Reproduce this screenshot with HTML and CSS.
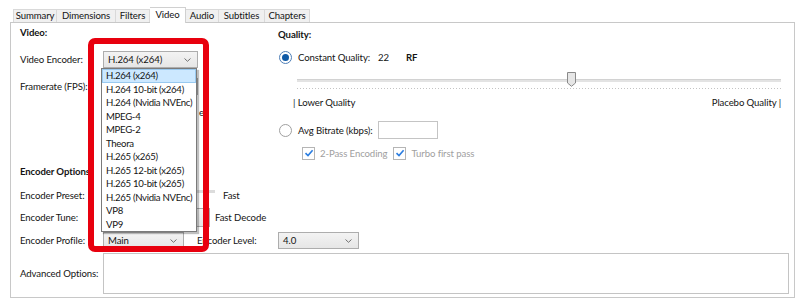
FILE: index.html
```html
<!DOCTYPE html>
<html lang="en">
<head>
  <meta charset="UTF-8">
  <title>Video Settings</title>
  <link rel="stylesheet" href="styles.css">
</head>
<body>
  <div class="tabs">
    <div class="tab w-summary">Summary</div>
    <div class="tab w-dim">Dimensions</div>
    <div class="tab w-filters">Filters</div>
    <div class="tab active w-video">Video</div>
    <div class="tab w-audio">Audio</div>
    <div class="tab w-subs">Subtitles</div>
    <div class="tab w-chap">Chapters</div>
  </div>

  <div class="panel">
    <div class="top">
      <div class="video-col">
        <div class="heading h-video">Video:</div>
        <div class="row r-encoder">
          <span class="label">Video Encoder:</span>
          <div class="select s-encoder">H.264 (x264)<svg class="chev" width="7" height="4" viewBox="0 0 7 4"><path d="M0.5 0.5 L3.5 3.3 L6.5 0.5" fill="none" stroke="#707070" stroke-width="1"/></svg></div>
        </div>
        <div class="row r-fps">
          <span class="label">Framerate (FPS):</span>
          <div class="select s-fps"></div>
        </div>
        <div class="row r-vfr">
          <span class="vfr-text">e</span>
        </div>
      </div>

      <div class="quality-col">
        <div class="heading h-quality">Quality:</div>
        <div class="qrow r-cq">
          <span class="radio checked"></span>
          <span>Constant Quality:</span>
          <span class="rf-val">22</span>
          <span class="rf-unit">RF</span>
        </div>
        <div class="slider">
          <div class="track"></div>
          <svg class="thumb" width="9" height="15" viewBox="0 0 9 15"><path d="M0.5 0.5 H8.5 V11 L4.5 14.3 L0.5 11 Z" fill="#e6e6e6" stroke="#8a8a8a" stroke-width="1"/></svg>
          <div class="ticks"></div>
        </div>
        <div class="scale">
          <span>| Lower Quality</span>
          <span>Placebo Quality |</span>
        </div>
        <div class="qrow r-ab">
          <span class="radio"></span>
          <span>Avg Bitrate (kbps):</span>
          <span class="textbox"></span>
        </div>
        <div class="qrow r-pass">
          <span class="check"><svg width="10" height="10" viewBox="0 0 10 10"><path d="M1.5 5.2 L4 7.6 L8.6 2.2" fill="none" stroke="#2b7de0" stroke-width="1.6"/></svg></span>
          <span class="muted">2-Pass Encoding</span>
          <span class="check c-turbo"><svg width="10" height="10" viewBox="0 0 10 10"><path d="M1.5 5.2 L4 7.6 L8.6 2.2" fill="none" stroke="#2b7de0" stroke-width="1.6"/></svg></span>
          <span class="muted">Turbo first pass</span>
        </div>
      </div>
    </div>

    <div class="encoder">
      <div class="heading h-enc">Encoder Options:</div>
      <div class="row r-preset">
        <span class="label">Encoder Preset:</span>
        <div class="preset-track"></div>
        <span class="preset-val">Fast</span>
      </div>
      <div class="row r-tune">
        <span class="label">Encoder Tune:</span>
        <div class="select s-tune"></div>
        <span class="tune-val">Fast Decode</span>
      </div>
      <div class="row r-profile">
        <span class="label">Encoder Profile:</span>
        <div class="select s-profile">Main<svg class="chev" width="7" height="4" viewBox="0 0 7 4"><path d="M0.5 0.5 L3.5 3.3 L6.5 0.5" fill="none" stroke="#707070" stroke-width="1"/></svg></div>
        <span class="level-label">Encoder Level:</span>
        <div class="select s-level">4.0<svg class="chev" width="7" height="4" viewBox="0 0 7 4"><path d="M0.5 0.5 L3.5 3.3 L6.5 0.5" fill="none" stroke="#707070" stroke-width="1"/></svg></div>
      </div>
      <div class="row r-adv">
        <span class="label">Advanced Options:</span>
        <div class="textarea"></div>
      </div>
    </div>

    <ul class="dropdown">
      <li class="selected">H.264 (x264)</li>
      <li>H.264 10-bit (x264)</li>
      <li>H.264 (Nvidia NVEnc)</li>
      <li>MPEG-4</li>
      <li>MPEG-2</li>
      <li>Theora</li>
      <li>H.265 (x265)</li>
      <li>H.265 12-bit (x265)</li>
      <li>H.265 10-bit (x265)</li>
      <li>H.265 (Nvidia NVEnc)</li>
      <li>VP8</li>
      <li>VP9</li>
    </ul>

    <div class="highlight"></div>
  </div>
</body>
</html>
```

FILE: styles.css
```css
body {
  margin: 0;
  background: #ffffff;
  font-family: Lato, "Noto Sans", sans-serif;
  font-size: 9.6px;
  letter-spacing: -0.1px;
  color: #141414;
}

/* tab strip */
.tabs {
  display: flex;
  align-items: flex-end;
  height: 22px;
  padding-left: 13px;
}

.tab {
  box-sizing: border-box;
  height: 13px;
  border: 1px solid #d9d9d9;
  border-bottom: none;
  border-left: none;
  background: #f0f0f0;
  text-align: center;
  line-height: 12px;
  white-space: nowrap;
}

.tab:first-child {
  border-left: 1px solid #d9d9d9;
}

.tab.active {
  height: 16px;
  background: #ffffff;
  border-color: #d0d0d0;
  line-height: 14px;
  position: relative;
  top: 1px;
  z-index: 1;
}

.w-summary { width: 44px; }
.w-dim { width: 59px; }
.w-filters { width: 34px; }
.w-video { width: 36px; }
.w-audio { width: 33px; }
.w-subs { width: 46px; }
.w-chap { width: 45px; }

/* main panel */
.panel {
  position: relative;
  box-sizing: border-box;
  width: 785px;
  height: 276px;
  margin-left: 10px;
  border: 1px solid #c8c8c8;
  padding-left: 9px;
}

.top {
  display: flex;
  height: 137px;
}

.video-col {
  width: 258px;
}

.quality-col {
  flex: 1;
  padding-right: 13px;
}

.heading {
  font-weight: bold;
}

.h-video { height: 20px; line-height: 20px; }
.h-quality { height: 24px; line-height: 24px; }
.h-enc { height: 24px; line-height: 24px; }

.row {
  display: flex;
  align-items: center;
}

.label {
  width: 83px;
  flex-shrink: 0;
  white-space: nowrap;
}

.r-encoder { height: 32px; }
.r-fps { height: 22px; }
.r-vfr { height: 30px; }

.select {
  box-sizing: border-box;
  position: relative;
  height: 17px;
  border: 1px solid #adadad;
  background: linear-gradient(#f3f3f3, #e6e6e6);
  padding-left: 4px;
  line-height: 15px;
}

.chev {
  position: absolute;
  right: 6px;
  top: 6px;
}

.s-encoder { width: 95px; }
.s-fps { width: 95px; }

.vfr-text {
  margin-left: 179px;
}

/* quality */
.qrow {
  display: flex;
  align-items: center;
  white-space: nowrap;
}

.r-cq { height: 20px; }

.radio {
  box-sizing: border-box;
  width: 13px;
  height: 13px;
  margin-left: 1px;
  margin-right: 6px;
  border: 1px solid #a0a0a0;
  border-radius: 50%;
  background: #ffffff;
  position: relative;
}

.radio.checked {
  border-color: #4f7fb8;
}

.radio.checked::after {
  content: "";
  position: absolute;
  left: 2px;
  top: 2px;
  width: 7px;
  height: 7px;
  border-radius: 50%;
  background: #0f5aa6;
}

.rf-val {
  margin-left: 8px;
}

.rf-unit {
  margin-left: 17px;
  font-weight: bold;
}

.slider {
  position: relative;
  height: 28px;
  margin-left: 19px;
}

.track {
  position: absolute;
  left: 0;
  right: 0;
  top: 12px;
  height: 2px;
  background: #e3e3e3;
  border-top: 1px solid #d2d2d2;
}

.thumb {
  position: absolute;
  left: 270px;
  top: 5px;
}

.ticks {
  position: absolute;
  left: 0;
  right: 0;
  top: 21px;
  height: 1px;
  background: repeating-linear-gradient(90deg, #c4c4c4 0 1px, transparent 1px 3px);
}

.scale {
  display: flex;
  justify-content: space-between;
  height: 16px;
  line-height: 16px;
  margin-left: 15px;
}

.r-ab {
  height: 22px;
  margin-top: 8px;
}

.textbox {
  box-sizing: border-box;
  width: 60px;
  height: 18px;
  margin-left: 6px;
  border: 1px solid #c4c4c4;
  background: #ffffff;
}

.r-pass {
  height: 24px;
  padding-left: 24px;
}

.check {
  box-sizing: border-box;
  width: 13px;
  height: 13px;
  border: 1px solid #b5b5b5;
  background: #ffffff;
  display: flex;
  align-items: center;
  justify-content: center;
  margin-right: 5px;
}

.c-turbo {
  margin-left: 6px;
}

.muted {
  color: #a0a0a0;
}

/* encoder options */
.r-preset { height: 22px; }
.r-tune { height: 22px; }
.r-profile { height: 24px; }

.preset-track {
  width: 112px;
  height: 3px;
  background: #dcdcdc;
  margin-top: -8px;
}

.preset-val {
  margin-left: 8px;
}

.s-tune {
  width: 107px;
  height: 19px;
}

.tune-val {
  margin-left: 5px;
}

.s-profile {
  width: 81px;
}

.level-label {
  margin-left: 13px;
  width: 81px;
  white-space: nowrap;
}

.s-level {
  width: 81px;
}

.r-adv {
  height: 41px;
  margin-top: 1px;
}

.textarea {
  box-sizing: border-box;
  width: 686px;
  height: 41px;
  border: 1px solid #c4c4c4;
  background: #ffffff;
}

/* open encoder list, drawn over the form */
.dropdown {
  position: absolute;
  left: 90px;
  top: 45px;
  box-sizing: border-box;
  width: 96px;
  height: 164px;
  margin: 0;
  padding: 0;
  list-style: none;
  background: #ffffff;
  border: 1px solid #7a7a7a;
  box-shadow: 2px 2px 1px rgba(0, 0, 0, 0.25);
}

.dropdown li {
  box-sizing: border-box;
  height: 13.5px;
  line-height: 13.5px;
  padding-left: 4px;
  letter-spacing: -0.3px;
  white-space: nowrap;
}

.dropdown li.selected {
  background: #cce8ff;
  outline: 1px solid #99c9ef;
  outline-offset: -1px;
}

.highlight {
  position: absolute;
  left: 77px;
  top: 15px;
  box-sizing: border-box;
  width: 121px;
  height: 214px;
  border: 6px solid #e8000e;
  border-radius: 7px;
}
```
